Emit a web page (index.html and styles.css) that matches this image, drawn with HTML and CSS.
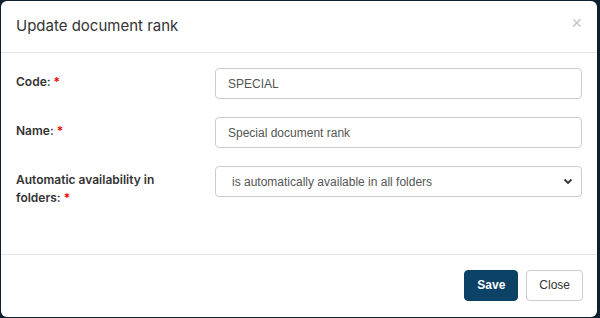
FILE: index.html
```html
<!DOCTYPE html>
<html>

<head>
    <title>Update document rank</title>
    <meta charset="utf-8">
    <meta name="viewport" content="width=device-width, initial-scale=1.0">

    <link rel="stylesheet" href="styles.css">
</head>

<body>

    <div class="modal">
        <div class="modal-header">
            <h4 class="modal-title">Update document rank</h4>
            <button class="luk">&times;</button>
        </div>

        <div class="modal-body">
            <div class="row">
                <label class="label">Code: <span class="req">*</span></label>
                <input class="field" type="text" value="SPECIAL">
            </div>
            <div class="row">
                <label class="label">Name: <span class="req">*</span></label>
                <input class="field" type="text" value="Special document rank">
            </div>
            <div class="row">
                <label class="label">
                    <span class="line">Automatic availability in</span>
                    <span class="line">folders: <span class="req">*</span></span>
                </label>
                <div class="select">
                    <span>is automatically available in all folders</span>
                    <svg width="10" height="7" viewBox="0 0 10 7">
                        <path d="M1.5 1.5 L5 5 L8.5 1.5" fill="none" stroke="#333" stroke-width="1.8"/>
                    </svg>
                </div>
            </div>
        </div>

        <div class="modal-footer">
            <button class="btn save">Save</button>
            <button class="btn close">Close</button>
        </div>
    </div>

</body>

</html>
```

FILE: styles.css
```css
body {
    margin: 0;
    width: 600px;
    height: 318px;
    background-color: #0c2130;
    font-family: Inter, "Liberation Sans", sans-serif;
    overflow: hidden;
}

.modal {
    box-sizing: border-box;
    margin: 1px 3px 0 1px;
    height: 316px;
    background-color: #fff;
    border-radius: 6px;
    display: flex;
    flex-direction: column;
}

.modal-header {
    height: 51px;
    border-bottom: 1px solid #e5e5e5;
    display: flex;
    align-items: center;
    justify-content: space-between;
    padding: 0 15px;
}

.modal-title {
    margin: 0 0 2px 0;
    font-size: 15px;
    font-weight: 400;
    color: #333;
}

.luk {
    border: none;
    background: none;
    font-size: 18px;
    color: #c4c4c4;
    padding: 0;
    margin-top: -6px;
    font-family: "Liberation Sans", sans-serif;
}

.modal-body {
    flex: 1;
    padding: 15px 15px 0 15px;
}

.row {
    display: grid;
    grid-template-columns: 199px 367px;
    align-items: start;
    margin-bottom: 18px;
}

.label {
    font-size: 12px;
    font-weight: 600;
    color: #333;
    line-height: 18px;
    padding-top: 5px;
    max-width: 160px;
}

.line {
    display: block;
}

.req {
    color: #e00;
}

.field,
.select {
    box-sizing: border-box;
    height: 31px;
    border: 1px solid #ccc;
    border-radius: 4px;
    padding: 0 12px;
    font-family: "Liberation Sans", sans-serif;
    font-size: 12px;
    color: #555;
    background: #fff;
}

.select {
    display: flex;
    align-items: center;
    justify-content: space-between;
    padding: 0 8px 0 16px;
}

.modal-footer {
    height: 60px;
    border-top: 1px solid #e5e5e5;
    display: flex;
    align-items: center;
    justify-content: flex-end;
    gap: 8px;
    padding: 0 14px 2px 0;
}

.btn {
    height: 31px;
    border-radius: 4px;
    font-family: "Liberation Sans", sans-serif;
    font-size: 12px;
    padding: 0 12px;
}

.save {
    background-color: #0b4266;
    border: 1px solid #0b4266;
    color: #fff;
    font-weight: 700;
}

.close {
    background-color: #fff;
    border: 1px solid #ccc;
    color: #333;
}
```
